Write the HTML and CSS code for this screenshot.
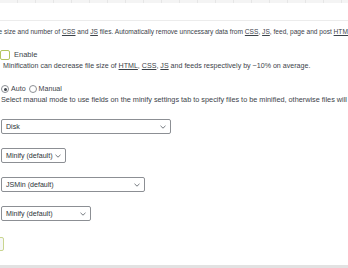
FILE: index.html
```html
<!DOCTYPE html>
<html lang="en">
  <head>
    <meta charset="UTF-8" />
    <title>Minify</title>
    <link rel="stylesheet" href="styles.css">
  </head>
  <body>
    <div class="tabs"></div>
    <div class="band"></div>

    <div class="content">
      <p class="intro">Reduce load time by decreasing the size and number of <abbr>CSS</abbr> and <abbr>JS</abbr> files. Automatically remove unncessary data from <abbr>CSS</abbr>, <abbr>JS</abbr>, feed, page and post <abbr>HTML</abbr>.</p>

      <label class="check"><span class="box"></span>Enable</label>
      <p class="desc">Minification can decrease file size of <abbr>HTML</abbr>, <abbr>CSS</abbr>, <abbr>JS</abbr> and feeds respectively by ~10% on average.</p>

      <div class="radios">
        <span class="radio on"></span>Auto
        <span class="radio"></span>Manual
      </div>
      <p class="desc wide">Select manual mode to use fields on the minify settings tab to specify files to be minified, otherwise files will be minified automatically.</p>

      <div class="select w-disk"><span>Disk</span><svg viewBox="0 0 6 4"><path d="M0.5 0.8 L3 3.2 L5.5 0.8" /></svg></div>
      <div class="select w-min"><span>Minify (default)</span><svg viewBox="0 0 6 4"><path d="M0.5 0.8 L3 3.2 L5.5 0.8" /></svg></div>
      <div class="select w-js"><span>JSMin (default)</span><svg viewBox="0 0 6 4"><path d="M0.5 0.8 L3 3.2 L5.5 0.8" /></svg></div>
      <div class="select w-min2"><span>Minify (default)</span><svg viewBox="0 0 6 4"><path d="M0.5 0.8 L3 3.2 L5.5 0.8" /></svg></div>

      <div class="btn"></div>
    </div>

    <div class="bottom"></div>
  </body>
</html>
```

FILE: styles.css
```css
body {
  margin: 0;
  background: #fff;
  font-family: "Liberation Sans", Arial, sans-serif;
  font-size: 7.1px;
  color: #3c434a;
  overflow: hidden;
}
.tabs {
  height: 3px;
  background: repeating-linear-gradient(90deg, #f4f4f4 0, #f4f4f4 17px, #e6e6e6 17px, #e6e6e6 18px);
}
.band {
  height: 17px;
  border-bottom: 1px solid #ececec;
}
abbr {
  text-decoration: underline;
  text-underline-offset: 1px;
}
.intro {
  margin: 6px 0 0 -103px;
  white-space: nowrap;
  line-height: 10px;
  font-size: 6.6px;
}
.check {
  display: flex;
  align-items: center;
  gap: 4px;
  margin-top: 12px;
  height: 11px;
  font-size: 7.5px;
}
.box {
  width: 8px;
  height: 8px;
  border: 1px solid #b3c55e;
  border-radius: 2px;
}
.desc {
  margin: 1px 0 0 3px;
  white-space: nowrap;
  line-height: 10px;
}
.desc.wide {
  margin-left: 1px;
  font-size: 7.3px;
}
.radios {
  display: flex;
  align-items: center;
  margin-top: 13px;
  height: 10px;
  gap: 2px;
}
.radio {
  width: 6px;
  height: 6px;
  border: 1px solid #8c8f94;
  border-radius: 50%;
  margin-left: 1px;
  position: relative;
}
.radio.on::after {
  content: "";
  position: absolute;
  left: 1.5px;
  top: 1.5px;
  width: 3px;
  height: 3px;
  border-radius: 50%;
  background: #3c434a;
}
.select {
  display: flex;
  align-items: center;
  justify-content: space-between;
  box-sizing: border-box;
  height: 15px;
  margin: 14px 0 0 1px;
  padding: 0 4px;
  border: 1px solid #8c8f94;
  border-radius: 2px;
  color: #2c3338;
}
.select svg {
  width: 6px;
  height: 4px;
  fill: none;
  stroke: #50575e;
  stroke-width: 0.8;
}
.w-disk {
  width: 170px;
  margin-top: 14px;
}
.w-min {
  width: 65px;
}
.w-js {
  width: 144px;
}
.w-min2 {
  width: 90px;
}
.btn {
  width: 14px;
  height: 14px;
  box-sizing: border-box;
  margin: 16px 0 0 -10px;
  border: 1px solid #c9d58f;
  border-radius: 2px;
  background: #f6f7f7;
}
.bottom {
  height: 4px;
  background: #e2e2e2;
  margin-top: 14px;
}
```
